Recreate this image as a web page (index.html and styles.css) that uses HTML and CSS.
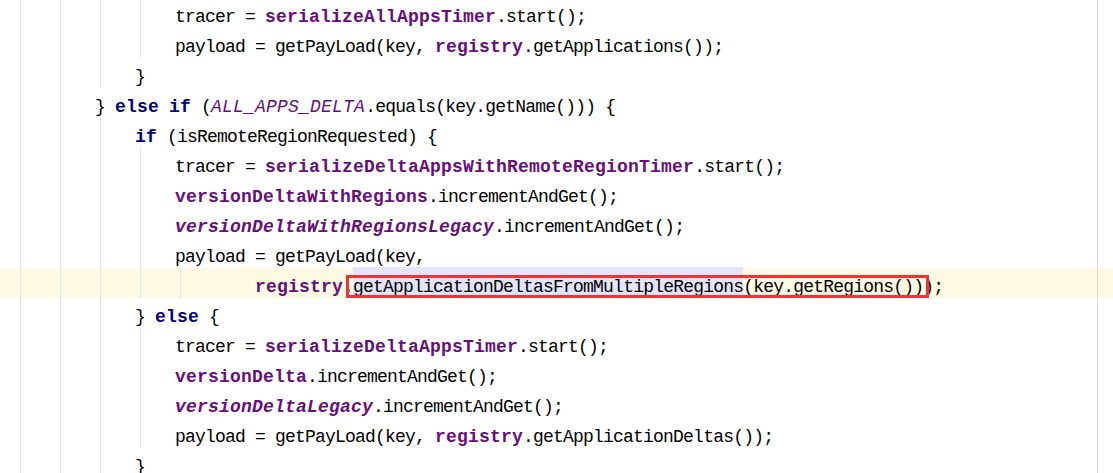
FILE: index.html
```html
<!DOCTYPE html>
<html lang="en">
<head>
  <meta charset="UTF-8">
  <title>Editor</title>
  <link rel="stylesheet" href="styles.css">
</head>
<body>
  <div class="editor">
    <div class="line g4">                tracer = <span class="f">serializeAllAppsTimer</span>.start();</div>
    <div class="line g4">                payload = getPayLoad(key, <span class="f">registry</span>.getApplications());</div>
    <div class="line g3">            }</div>
    <div class="line g2">        } <span class="kw">else</span> <span class="kw">if</span> (<span class="sf">ALL_APPS_DELTA</span>.equals(key.getName())) {</div>
    <div class="line g3">            <span class="kw">if</span> (isRemoteRegionRequested) {</div>
    <div class="line g4">                tracer = <span class="f">serializeDeltaAppsWithRemoteRegionTimer</span>.start();</div>
    <div class="line g4">                <span class="f">versionDeltaWithRegions</span>.incrementAndGet();</div>
    <div class="line g4">                <span class="f s">versionDeltaWithRegionsLegacy</span>.incrementAndGet();</div>
    <div class="line g4">                payload = getPayLoad(key,</div>
    <div class="line g5 caret">                        <span class="f">registry</span>.<span class="hl">getApplicationDeltasFromMultipleRegions</span>(key.getRegions()));<span class="mark"></span></div>
    <div class="line g3">            } <span class="kw">else</span> {</div>
    <div class="line g4">                tracer = <span class="f">serializeDeltaAppsTimer</span>.start();</div>
    <div class="line g4">                <span class="f">versionDelta</span>.incrementAndGet();</div>
    <div class="line g4">                <span class="f s">versionDeltaLegacy</span>.incrementAndGet();</div>
    <div class="line g4">                payload = getPayLoad(key, <span class="f">registry</span>.getApplicationDeltas());</div>
    <div class="line g3">            }</div>
  </div>
</body>
</html>
```

FILE: styles.css
```css
* { box-sizing: border-box; }

html, body {
  margin: 0;
  padding: 0;
  background: #fff;
  overflow: hidden;
}

.editor {
  position: relative;
  margin-top: -2px;
  font-family: 'Liberation Mono', monospace;
  font-size: 18px;
  letter-spacing: -0.8px;
  color: #000;
}

/* right margin */
.editor::after {
  content: '';
  position: absolute;
  top: 0;
  bottom: 0;
  left: 1097px;
  width: 1px;
  background: #d6d6d6;
}

.line {
  position: relative;
  height: 30px;
  padding: 9px 0 0 15px;
  line-height: 21px;
  white-space: pre;
  background-repeat: no-repeat;
}

/* indent guides */
.g2 {
  background-image: linear-gradient(#e3e3e3, #e3e3e3), linear-gradient(#e3e3e3, #e3e3e3);
  background-position: 20px 0, 60px 0;
  background-size: 1px 100%;
}

.g3 {
  background-image: linear-gradient(#e3e3e3, #e3e3e3), linear-gradient(#e3e3e3, #e3e3e3), linear-gradient(#e3e3e3, #e3e3e3);
  background-position: 20px 0, 60px 0, 100px 0;
  background-size: 1px 100%;
}

.g4 {
  background-image: linear-gradient(#e3e3e3, #e3e3e3), linear-gradient(#e3e3e3, #e3e3e3), linear-gradient(#e3e3e3, #e3e3e3), linear-gradient(#e3e3e3, #e3e3e3);
  background-position: 20px 0, 60px 0, 100px 0, 140px 0;
  background-size: 1px 100%;
}

.g5 {
  background-image: linear-gradient(#e3e3e3, #e3e3e3), linear-gradient(#e3e3e3, #e3e3e3), linear-gradient(#e3e3e3, #e3e3e3), linear-gradient(#e3e3e3, #e3e3e3), linear-gradient(#e3e3e3, #e3e3e3);
  background-position: 20px 0, 60px 0, 100px 0, 140px 0, 180px 0;
  background-size: 1px 100%;
}

.caret {
  background-color: #fef9e3;
}

.kw {
  color: #000080;
  font-weight: bold;
  letter-spacing: 0.2px;
}

.f {
  color: #660e7a;
  font-weight: bold;
  letter-spacing: 0.2px;
}

.s {
  font-style: italic;
}

.sf {
  color: #660e7a;
  font-style: italic;
  letter-spacing: 0.2px;
}

.hl {
  background: #e4e4fc;
  padding: 10px 0 1px;
}

.mark {
  position: absolute;
  left: 346px;
  top: 7px;
  width: 583px;
  height: 23px;
  border: 3px solid #ee3535;
}
```
